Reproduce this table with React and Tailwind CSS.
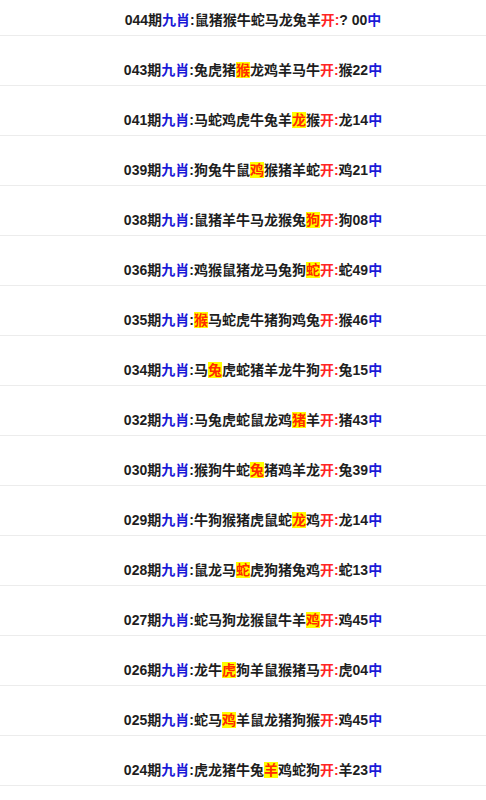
const rows = [
  { no: '044', list: '鼠猪猴牛蛇马龙兔羊', hit: -1, open: '? 00' },
  { no: '043', list: '兔虎猪猴龙鸡羊马牛', hit: 3, open: '猴22' },
  { no: '041', list: '马蛇鸡虎牛兔羊龙猴', hit: 7, open: '龙14' },
  { no: '039', list: '狗兔牛鼠鸡猴猪羊蛇', hit: 4, open: '鸡21' },
  { no: '038', list: '鼠猪羊牛马龙猴兔狗', hit: 8, open: '狗08' },
  { no: '036', list: '鸡猴鼠猪龙马兔狗蛇', hit: 8, open: '蛇49' },
  { no: '035', list: '猴马蛇虎牛猪狗鸡兔', hit: 0, open: '猴46' },
  { no: '034', list: '马兔虎蛇猪羊龙牛狗', hit: 1, open: '兔15' },
  { no: '032', list: '马兔虎蛇鼠龙鸡猪羊', hit: 7, open: '猪43' },
  { no: '030', list: '猴狗牛蛇兔猪鸡羊龙', hit: 4, open: '兔39' },
  { no: '029', list: '牛狗猴猪虎鼠蛇龙鸡', hit: 7, open: '龙14' },
  { no: '028', list: '鼠龙马蛇虎狗猪兔鸡', hit: 3, open: '蛇13' },
  { no: '027', list: '蛇马狗龙猴鼠牛羊鸡', hit: 8, open: '鸡45' },
  { no: '026', list: '龙牛虎狗羊鼠猴猪马', hit: 2, open: '虎04' },
  { no: '025', list: '蛇马鸡羊鼠龙猪狗猴', hit: 2, open: '鸡45' },
  { no: '024', list: '虎龙猪牛兔羊鸡蛇狗', hit: 5, open: '羊23' },
]

const Row = ({ r }) => (
  <div className="h-[50px] flex items-end justify-center pl-5 pb-[5px] border-b border-[#ececec]">
    <p className="text-[14px] leading-5 font-bold text-[#1e1e1e] whitespace-nowrap">
      {r.no}期<span className="text-[#1a1ad8]">九肖</span>:
      {[...r.list].map((c, i) =>
        i === r.hit
          ? <span key={i} className="bg-[#ffff00] text-[#ff2a00]">{c}</span>
          : <span key={i}>{c}</span>
      )}
      <span className="text-[#ff2424]">开:</span>{r.open}
      <span className="text-[#1a1ad8]">中</span>
    </p>
  </div>
)

export default function App() {
  return (
    <div className="bg-white h-[800px] overflow-hidden" style={{ fontFamily: '"Liberation Sans", "Noto Sans CJK SC", sans-serif' }}>
      <div className="-mt-[14px]">
        {rows.map(r => <Row key={r.no} r={r} />)}
      </div>
    </div>
  )
}
